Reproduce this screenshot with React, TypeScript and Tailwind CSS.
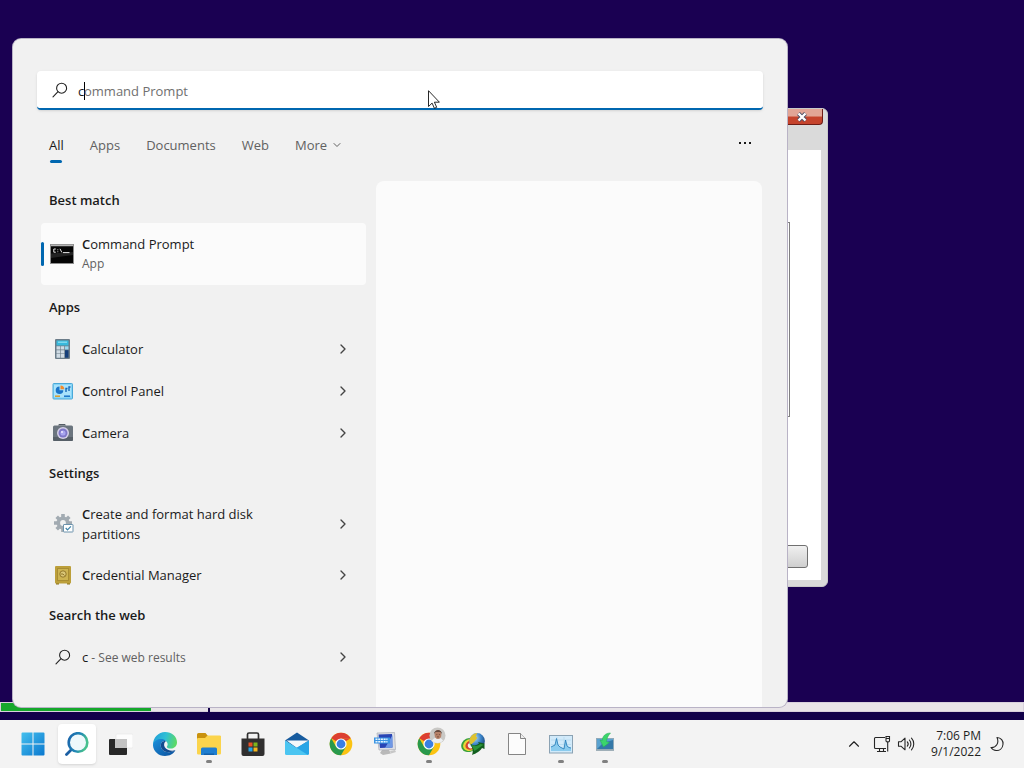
import React, { useState } from "react";
import { ChevronDown, ChevronRight, ChevronUp } from "lucide-react";
import clsx from "clsx";

type IconProps = { className?: string };

// Icons

function SearchIcon({ className }: IconProps) {
  return (
    <svg viewBox="0 0 16 16" className={className} fill="none" stroke="#222" strokeWidth="1.1">
      <circle cx="9.6" cy="6.2" r="5" />
      <path d="M5.8 9.8 1 14.8" strokeLinecap="round" />
    </svg>
  );
}

function CommandPromptIcon() {
  return (
    <svg viewBox="0 0 24 20" className="w-6 h-5">
      <rect x="0.5" y="0.5" width="23" height="19" fill="#050505" stroke="#8d8d8d" />
      <path d="M1 1.5h22" stroke="#b5b5b5" strokeWidth="1.4" />
      <path d="M1 9.5 23 8v3L1 14z" fill="#222" />
      <path d="M5.8 5H3.8v3.2h2M7.8 5.4v.8M7.8 7.4v.8M10 4.8l1.8 3.6M13 8.6h6.5" stroke="#e6e6e6" fill="none" />
    </svg>
  );
}

function CalculatorIcon() {
  return (
    <svg viewBox="0 0 24 24" className="w-6 h-6">
      <rect x="5" y="2" width="15" height="20" rx="1" fill="#6b7c89" />
      <rect x="6.500" y="3.500" width="12" height="5" fill="#38b9dc" />
      <path d="M8 4.500h9v1.500H8z" fill="#7fd8ee" />
      <path d="M6.500 9.300h3.600v3.200H6.500zM10.700 9.300h3.600v3.200h-3.600zM6.500 13.200h3.600v3.200H6.500zM10.700 13.200h3.600v3.200h-3.600zM6.500 17.100h3.600v3.600H6.500zM10.700 17.100h3.600v3.600h-3.600z" fill="#cfdbe4" />
      <path d="M15 9.300h3.500v3.200H15z" fill="#9ad8ef" />
      <path d="M15 13.200h3.500v7.500H15z" fill="#153f7a" />
    </svg>
  );
}

function ControlPanelIcon() {
  return (
    <svg viewBox="0 0 24 24" className="w-6 h-6">
      <rect x="3" y="4.500" width="19.500" height="15.500" rx="0.800" fill="#87d5f7" stroke="#4ba9d8" />
      <path d="M4 6h17v11L12 18.500 4 18z" fill="#a9e3fb" />
      <path d="M9.500 7.500a3.800 3.800 0 1 0 3.800 3.800H9.500z" fill="#1b75c9" />
      <path d="M10.500 6.500v3.800h3.800a3.800 3.800 0 0 0-3.800-3.800z" fill="#f08a2c" />
      <path d="M16 13V9.500h1.500M19 12V8h1.500" stroke="#1769b8" strokeWidth="1.400" fill="none" />
      <path d="M5 17.200h5" stroke="#dd9b26" strokeWidth="1.500" />
      <path d="M14 17.200h6" stroke="#1b75c9" strokeWidth="1.500" />
    </svg>
  );
}

function CameraIcon() {
  return (
    <svg viewBox="0 0 24 24" className="w-6 h-6">
      <path d="M8 4.500 9 3h6l1 1.500z" fill="#555e66" />
      <rect x="3" y="4.500" width="20" height="15.500" rx="1.500" fill="#6b757e" />
      <path d="M3 16h20v2.500a1.500 1.500 0 0 1-1.500 1.500h-17A1.500 1.500 0 0 1 3 18.500z" fill="#565f67" />
      <circle cx="13" cy="12" r="6" fill="#d5d0e8" />
      <circle cx="13" cy="12" r="4.500" fill="#7f78c9" />
      <circle cx="13" cy="12" r="2.600" fill="#a9a6f0" />
      <circle cx="12" cy="11" r="1" fill="#f0eaff" />
    </svg>
  );
}

function GearCheckIcon() {
  return (
    <svg viewBox="0 0 24 24" className="w-6 h-6">
      <g stroke="#a2abb2" strokeWidth="3.600">
        <path d="M13 2v18M4 11h18M6.700 4.700l12.600 12.600M19.300 4.700 6.700 17.300" />
      </g>
      <circle cx="13" cy="11" r="6.500" fill="#a2abb2" />
      <circle cx="13" cy="11" r="2.900" fill="#f1f1f1" />
      <rect x="13.500" y="12.500" width="9.500" height="7.500" rx="0.500" fill="#fff" stroke="#6c93ad" />
      <path d="m15.700 16 1.800 1.800 3.400-3.400" stroke="#3b82a8" strokeWidth="1.200" fill="none" />
    </svg>
  );
}

function SafeIcon() {
  return (
    <svg viewBox="0 0 24 24" className="w-6 h-6">
      <path d="M6 19h3v2.500H6zM17 19h3v2.500h-3z" fill="#8d7420" />
      <rect x="5" y="3" width="16" height="17.500" rx="1" fill="#bc9f3a" />
      <rect x="7.500" y="5.500" width="11" height="12" fill="#cdb452" stroke="#a88d33" />
      <circle cx="13" cy="11" r="3.200" fill="#d9c677" stroke="#93782a" />
      <path d="M13 11h-2.200M13 11l1.500 1.500" stroke="#93782a" />
    </svg>
  );
}

function StartIcon() {
  return (
    <svg viewBox="0 0 24 24" className="w-6 h-6">
      <defs>
        <linearGradient id="start" x1="0" y1="0" x2="1" y2="1" gradientUnits="objectBoundingBox">
          <stop offset="0" stopColor="#45c0ee" />
          <stop offset="1" stopColor="#0a78cf" />
        </linearGradient>
      </defs>
      <path d="M1.500 0.500h10v11h-11v-10a1 1 0 0 1 1-1zM12.500 0.500h10a1 1 0 0 1 1 1v10h-11zM0.500 12.500h11v11h-10a1 1 0 0 1-1-1zM12.500 12.500h11v10a1 1 0 0 1-1 1h-10z" fill="url(#start)" />
    </svg>
  );
}

function TaskbarSearchIcon() {
  return (
    <svg viewBox="0 0 24 24" className="w-6 h-6" fill="none">
      <defs>
        <linearGradient id="lens" x1="0" y1="0" x2="1" y2="0.300">
          <stop offset="0" stopColor="#1b64ab" />
          <stop offset="0.600" stopColor="#2187b5" />
          <stop offset="1" stopColor="#46c08f" />
        </linearGradient>
      </defs>
      <path d="m7.500 16.500-6 6" stroke="#1b5fa3" strokeWidth="2.800" strokeLinecap="round" />
      <circle cx="13" cy="10.500" r="9.300" fill="#eef8fb" stroke="url(#lens)" strokeWidth="2.600" />
    </svg>
  );
}

function TaskViewIcon() {
  return (
    <svg viewBox="0 0 24 24" className="w-6 h-6">
      <rect x="7" y="2" width="17" height="14" rx="1" fill="#fdfdfd" stroke="#e3e3e3" strokeWidth="0.500" />
      <rect x="0" y="7" width="18" height="16" rx="1" fill="#282828" />
      <path d="M6 7h12v9H6z" fill="#c3c3c3" />
    </svg>
  );
}

function EdgeIcon() {
  return (
    <svg viewBox="0 0 24 24" className="w-6 h-6">
      <defs>
        <linearGradient id="edgeTop" x1="0" y1="0.300" x2="1" y2="0.500">
          <stop offset="0" stopColor="#219fd8" />
          <stop offset="0.500" stopColor="#2fbfd5" />
          <stop offset="1" stopColor="#5dda62" />
        </linearGradient>
        <linearGradient id="edgeBody" x1="0" y1="0" x2="1" y2="1">
          <stop offset="0" stopColor="#1c91dc" />
          <stop offset="1" stopColor="#0b4f9c" />
        </linearGradient>
      </defs>
      <path d="M0 13C0 5.500 5.500 0 12 0c7 0 12 4.800 12 10.200 0 4-3 6.300-6.200 6.300-2.800 0-4.300-1-4-1.800 1.200-1.500 1.200-3.500-.2-5C10.500 6.500 3 7 0 13z" fill="url(#edgeTop)" />
      <path d="M0 12.500C1.500 7 9.500 5.500 13 9c-3.500-.5-5.500 2-5.300 4.700.3 4.200 4.500 7.300 10 6.300 2-.3 3.500-1 4.700-1.700C20.500 22 16.500 24 12 24 5 24-.3 18.500 0 12.500z" fill="url(#edgeBody)" />
      <path d="M7.700 13.700C7.500 11 9.500 8.500 13 9c-2 1.500-2.500 4-1.200 6.300 2 3 6.700 4.200 10.600 3-1.200 1-3 1.500-4.700 1.700-5.500 1-9.700-2.100-10-6.300z" fill="#124b8f" />
    </svg>
  );
}

function ExplorerIcon() {
  return (
    <svg viewBox="0 0 24 24" className="w-6 h-6">
      <path d="M0 2.500A1.500 1.500 0 0 1 1.500 1h7l2.500 3h11.500A1.500 1.500 0 0 1 24 5.500V20H0z" fill="#c9920f" />
      <path d="M0 7.300A1.300 1.300 0 0 1 1.300 6H8l2.500-2.500h12.200A1.300 1.300 0 0 1 24 4.800v16.400a1.300 1.300 0 0 1-1.300 1.300H1.300A1.300 1.300 0 0 1 0 21.200z" fill="#fbd44c" />
      <path d="M4 23v-6a1.500 1.500 0 0 1 1.500-1.500h13A1.500 1.500 0 0 1 20 17v6z" fill="#1f7ed0" />
      <path d="M7 21.500h10V23H7z" fill="#1460a8" />
    </svg>
  );
}

function StoreIcon() {
  return (
    <svg viewBox="0 0 24 24" className="w-6 h-6">
      <path d="M6.500 7V2.500a1.500 1.500 0 0 1 1.500-1.500h8a1.500 1.500 0 0 1 1.500 1.500V7" fill="none" stroke="#2f2f2f" strokeWidth="1.700" />
      <path d="M0.500 6.500h23V22a2 2 0 0 1-2 2h-19a2 2 0 0 1-2-2z" fill="#302f2f" />
      <path d="M7.500 10.500h4v4h-4z" fill="#ea5025" />
      <path d="M12.500 10.500h4v4h-4z" fill="#7fb41c" />
      <path d="M7.500 15.500h4v4h-4z" fill="#27a4e4" />
      <path d="M12.500 15.500h4v4h-4z" fill="#f5b71e" />
    </svg>
  );
}

function MailIcon() {
  return (
    <svg viewBox="0 0 24 24" className="w-6 h-6">
      <path d="M0 8.500 12 0.500l12 8L12 17z" fill="#175b9e" />
      <path d="M1.500 8.500h22L12 16z" fill="#f4f8fa" />
      <path d="M24 8.500v13a1.500 1.500 0 0 1-1.500 1.500h-21L12 15.500z" fill="#27a5e6" />
      <path d="M0 8.500v13A1.500 1.500 0 0 0 1.500 23H23z" fill="#4bc5f1" />
    </svg>
  );
}

function ChromeIcon() {
  return (
    <svg viewBox="0 0 24 24" className="w-6 h-6">
      <circle cx="12" cy="12" r="11.300" fill="#fbc312" />
      <path d="M12 12 2.210 6.350A11.300 11.300 0 0 1 21.790 6.350H12z" fill="#dc3f32" />
      <path d="M2.210 6.350A11.300 11.300 0 0 0 12 23.300L16.900 14.800 12 12 7.100 14.800z" fill="#29994c" />
      <path d="M12 12 21.790 6.350H12L7 9z" fill="#dc3f32" />
      <circle cx="12" cy="12" r="5.600" fill="#fff" />
      <circle cx="12" cy="12" r="4.400" fill="#397fe3" />
    </svg>
  );
}

function MonitorAppIcon() {
  return (
    <svg viewBox="0 0 24 24" className="w-6 h-6">
      <path d="M9 18h7l2 3.500-8 1.500-3-2z" fill="#b9b9b9" />
      <path d="m4 1 17.500-.5 1 17L6 18z" fill="#dddfe4" stroke="#9fa3ac" strokeWidth="0.600" />
      <path d="m5.500 2.500 13.500-.5.500 13.500L7 16z" fill="#2945b5" />
      <path d="m12 16 7.500-13v12.500z" fill="#6e98e5" />
      <path d="M1 5.500h16v6H1z" fill="#3b95e3" />
      <path d="M2.500 7.200h12M2.500 9.700h12" stroke="#eaf6ff" strokeWidth="1.400" strokeDasharray="2 0.700" />
      <path d="m17 19 5-1 1 2-5 1.500z" fill="#c7c7c7" />
    </svg>
  );
}

function DownloadGlobeIcon() {
  return (
    <svg viewBox="0 0 24 24" className="w-6 h-6">
      <defs>
        <radialGradient id="globe" cx="0.350" cy="0.300" r="0.800">
          <stop offset="0" stopColor="#b8ddf7" />
          <stop offset="0.500" stopColor="#3c86ca" />
          <stop offset="1" stopColor="#163768" />
        </radialGradient>
      </defs>
      <g transform="rotate(-25 8 13)">
        <ellipse cx="8" cy="13" rx="8" ry="6.800" fill="#38a13a" />
        <ellipse cx="8.800" cy="13.400" rx="7" ry="5.800" fill="#e9d737" />
        <ellipse cx="9.600" cy="13.800" rx="5.600" ry="4.400" fill="#d5422d" />
        <ellipse cx="10.400" cy="14.200" rx="4" ry="3" fill="#f0eee4" />
      </g>
      <circle cx="16" cy="9" r="7.900" fill="url(#globe)" />
      <path d="M8.300 9c.4-4 3.700-7.800 8-8l-1.500 3 1.500 2-3.300 4-3.200 3c-.9-1-1.500-2.500-1.500-4z" fill="#dfc331" />
      <path d="M9.500 11.500c3 3 6 2 8.500 0L17 10l6.500 1.500v5.500L21 16c-1.500 2.500-5.500 5.500-10 7 1.500-3 .5-7.500-1.500-11.500z" fill="#125e1e" />
      <path d="M10 12c3.200 3 6.300 2.200 9.500 0l3 .7L13.500 19z" fill="#2b9439" />
    </svg>
  );
}

function DocumentIcon() {
  return (
    <svg viewBox="0 0 24 24" className="w-6 h-6">
      <path d="M3.500 1.500h12l5 5v16h-17z" fill="#fcfcfc" stroke="#777" strokeWidth="0.900" />
      <path d="M15.500 1.500v5h5" fill="#eee" stroke="#777" strokeWidth="0.900" />
    </svg>
  );
}

function PerfMonitorIcon() {
  return (
    <svg viewBox="0 0 24 24" className="w-6 h-6">
      <rect x="0.500" y="3.500" width="23" height="17.500" fill="#d1eafa" stroke="#8ba2b3" />
      <path d="M2 8h20M2 12.500h20M8 5v14M15 5v14" stroke="#b2d7ec" strokeWidth="0.700" />
      <path d="M2 19v-4l2-1 2-1L7.500 6.500 9 13l2 2 2 1 2 1L16.500 8 18 14l2 1.500 2 .5v3z" fill="#8acbee" />
      <path d="m2 15 2-1 2-1L7.500 6.500 9 13l2 2 2 1 2 1L16.500 8 18 14l2 1.500 2 .5" stroke="#2b81bc" fill="none" strokeWidth="0.900" />
    </svg>
  );
}

function InstallerIcon() {
  return (
    <svg viewBox="0 0 24 24" className="w-6 h-6">
      <rect x="3.500" y="6.500" width="17" height="11" fill="#5aa2d0" stroke="#8fa9b9" />
      <path d="m4 17 6-6 10-3v9z" fill="#3478a8" />
      <path d="M3 18.200h18" stroke="#9aabb5" strokeWidth="1.500" />
      <path d="M17.500 1c-5 0-8 3-8.300 7.500L7 8l3.500 7 6-4.500-3-.8c.2-3.200 1.500-6 4-8.700z" fill="#3bd56b" stroke="#25ad54" strokeWidth="0.500" />
    </svg>
  );
}

function ProfileBadge() {
  return (
    <svg viewBox="0 0 18 18" className="h-[17px] w-[17px]">
      <circle cx="9" cy="9" r="8.500" fill="#c9c8c5" />
      <path d="M3 14.500c1.500-2.500 3.500-3 6-3s4.500.5 6 3A8.500 8.500 0 0 1 3 14.500z" fill="#eceef0" />
      <ellipse cx="9.500" cy="8" rx="3.600" ry="4.700" fill="#b68168" />
      <path d="M5.500 7.500C5 2.500 14 2 13.500 7.500L12 5H7z" fill="#4a3832" />
      <path d="M7.800 8h1M10.500 8h1M8.500 10.500h2" stroke="#5a3527" strokeWidth="0.700" />
    </svg>
  );
}

function NetworkIcon() {
  return (
    <svg viewBox="0 0 18 18" className="w-[18px] h-[18px]" fill="none" stroke="#262626" strokeWidth="1.100">
      <path d="M12 2.500H2.500a1 1 0 0 0-1 1v9a1 1 0 0 0 1 1H13" />
      <path d="M6.500 13.500v3M10.500 13.500v3M4 16.500h9" />
      <path d="M13 1.500h3.500v4.200c0 .6-.5 1.200-1.200 1.200h-1c-.8 0-1.300-.5-1.300-1.200zM13 3.500h3.500M14.700 7v9.500" />
    </svg>
  );
}

function VolumeIcon() {
  return (
    <svg viewBox="0 0 18 18" className="w-[18px] h-[18px]" fill="none" stroke="#262626" strokeWidth="1.100" strokeLinecap="round" strokeLinejoin="round">
      <path d="M1.500 6.700h2.700L8 3.200v11.600l-3.800-3.500H1.500z" />
      <path d="M10.300 6.800c1 1.200 1 3.200 0 4.400M12.400 5c2 2.200 2 5.800 0 8M14.500 3.200c3 3.200 3 8.400 0 11.600" />
    </svg>
  );
}

function MoonIcon() {
  return (
    <svg viewBox="0 0 16 16" className="w-4 h-4" fill="none" stroke="#262626" strokeWidth="1.100" strokeLinejoin="round">
      <path d="M8 1.500c4.200.2 6.300 3.200 6 6.700-.4 4.500-3.600 6.500-6.800 6.300-2.400-.1-4.200-1.300-5.200-3 5 .3 8.500-4.500 6-10z" />
    </svg>
  );
}

// Search results

type Result = {
  name: string;
  icon: () => React.ReactElement;
};

const apps: Result[] = [
  { name: "Calculator", icon: CalculatorIcon },
  { name: "Control Panel", icon: ControlPanelIcon },
  { name: "Camera", icon: CameraIcon },
];

const settings: Result[] = [
  { name: "Create and format hard disk partitions", icon: GearCheckIcon },
  { name: "Credential Manager", icon: SafeIcon },
];

function SectionTitle({ children }: { children: React.ReactNode }) {
  return <h2 className="flex h-10 items-center pl-2 text-[13px] font-semibold">{children}</h2>;
}

function ResultRow({ name, icon: Icon }: Result) {
  return (
    <li>
      <button className="flex min-h-[42px] w-full items-center gap-2 rounded py-[10px] pl-[9px] pr-[15px] text-left hover:bg-white/70">
        <span className="-my-1 shrink-0">
          <Icon />
        </span>
        {/* the typed letter is emphasised in every match */}
        <span className="block flex-1 pr-14 text-[13px] leading-5 first-letter:font-semibold">{name}</span>
        <ChevronRight className="h-4 w-4 shrink-0 text-[#444]" />
      </button>
    </li>
  );
}

function SearchBox() {
  const [query, setQuery] = useState("c");

  return (
    <div className="relative flex h-[39px] items-center rounded border-b-2 border-[#0067b0] bg-white pl-[15px] shadow-sm">
      <label htmlFor="query" aria-label="Search">
        <SearchIcon className="h-4 w-4" />
      </label>
      <input
        id="query"
        value={query}
        onChange={(e) => setQuery(e.target.value)}
        autoComplete="off"
        className="ml-[10px] h-full flex-1 bg-transparent pt-[2px] text-[13px] outline-none"
      />
      {query === "c" && (
        <div className="pointer-events-none absolute left-[47px] flex items-center pt-[2px] text-[13px] leading-5 text-[#707070]">
          <span className="-mr-px h-[18px] w-px bg-black" />
          ommand Prompt
        </div>
      )}
    </div>
  );
}

function SearchTabs() {
  const [active, setActive] = useState("All");
  const tabs = ["All", "Apps", "Documents", "Web"];

  return (
    <div className="mt-[25px] flex items-start gap-[26px] px-3 text-[13px] leading-5 text-[#616161]">
      {tabs.map((tab) => (
        <button
          key={tab}
          onClick={() => setActive(tab)}
          className={clsx("flex flex-col items-center gap-[5px]", active === tab && "text-[#1a1a1a]")}
        >
          {tab}
          <span className={clsx("h-[3px] w-3 rounded-full", active === tab && "bg-[#0067b0]")} />
        </button>
      ))}
      <button className="flex items-center gap-1">
        More <ChevronDown className="h-3 w-3" strokeWidth={2} />
      </button>
      <button aria-label="Options" className="ml-auto flex h-4 items-center gap-[3px]">
        <span className="h-[2px] w-[2px] bg-[#1a1a1a]" />
        <span className="h-[2px] w-[2px] bg-[#1a1a1a]" />
        <span className="h-[2px] w-[2px] bg-[#1a1a1a]" />
      </button>
    </div>
  );
}

function SearchPanel() {
  return (
    <section className="absolute bottom-[13px] left-[13px] top-[39px] flex w-[774px] flex-col overflow-hidden rounded-lg bg-[#f1f1f1] px-6 pt-8 text-[#1a1a1a] shadow-[0_0_0_1px_#b9b3c6]">
      <SearchBox />
      <SearchTabs />

      <div className="mt-[18px] flex min-h-0 flex-1 gap-[10px]">
        <div className="ml-1 w-[325px] shrink-0">
          <SectionTitle>Best match</SectionTitle>
          <button className="mb-[3px] mt-[2px] flex h-[62px] w-full items-center rounded bg-[#fbfbfb] text-left">
            <span className="h-6 w-[3px] rounded-full bg-[#0067b0]" />
            <span className="ml-[6px] mr-2">
              <CommandPromptIcon />
            </span>
            <span className="flex flex-col">
              <span className="block text-[13px] leading-5 first-letter:font-semibold">Command Prompt</span>
              <span className="text-xs leading-5 text-[#616161]">App</span>
            </span>
          </button>

          <SectionTitle>Apps</SectionTitle>
          <ul>
            {apps.map((app) => (
              <ResultRow key={app.name} {...app} />
            ))}
          </ul>

          <SectionTitle>Settings</SectionTitle>
          <ul>
            {settings.map((setting) => (
              <ResultRow key={setting.name} {...setting} />
            ))}
          </ul>

          <SectionTitle>Search the web</SectionTitle>
          <button className="flex min-h-[42px] w-full items-center py-[10px] pl-[14px] pr-[15px] text-left">
            <SearchIcon className="h-4 w-4" />
            <span className="ml-[11px] flex-1 text-xs leading-5 text-[#616161]">
              <span className="text-[13px] text-[#1a1a1a]">c</span> - See web results
            </span>
            <ChevronRight className="h-4 w-4 text-[#444]" />
          </button>
        </div>

        <div className="mr-px flex-1 rounded-t-lg bg-[#fbfbfb]" />
      </div>
    </section>
  );
}

// Desktop

function DialogWindow() {
  return (
    <section className="absolute left-[240px] top-[108px] flex h-[479px] w-[588px] flex-col rounded-md border border-[#c9c9c9] bg-[#dadada] px-[6px] pb-[6px]">
      <div className="flex h-[41px] shrink-0 items-start justify-end">
        <button
          aria-label="Close"
          className="-mr-[2px] flex h-4 w-[42px] items-center justify-center rounded-b border border-t-0 border-[#6d1c15] bg-linear-to-b from-[#e2a596] from-45% to-[#c5432c] to-55%"
        >
          <svg viewBox="0 0 12 10" className="h-[10px] w-3">
            <path d="m2.500 1.500 7 7m0-7-7 7" stroke="#4b4f66" strokeWidth="4" />
            <path d="m2.500 1.500 7 7m0-7-7 7" stroke="#fff" strokeWidth="2.400" />
          </svg>
        </button>
      </div>
      <div className="flex flex-1 flex-col items-end justify-between bg-white pb-3 pt-[72px]">
        <div className="mr-[31px] h-[195px] w-[500px] border border-[#808080]" />
        <button aria-label="Cancel" className="mr-[13px] h-[23px] w-[75px] rounded-[3px] border border-[#707070] bg-linear-to-b from-[#f0f0f0] to-[#cfcfcf]" />
      </div>
    </section>
  );
}

function ProgressStrip() {
  return (
    <div className="absolute inset-x-0 bottom-0 bg-[#12004a] pb-2">
      <div className="flex h-[10px] border border-[#d8d0dc] bg-[#e8e4e8]">
        <div className="h-full w-[150px] bg-[#16a82c]" />
        <div className="ml-[57px] h-[10px] w-[2px] bg-[#12004a]" />
      </div>
    </div>
  );
}

function Pointer() {
  return (
    <svg viewBox="0 0 12 19" className="absolute left-[428px] top-[90px] h-[19px] w-3">
      <path d="M0.500 0.700v15.800l3.600-3.400 2.300 5.200 2.300-1-2.300-5.100h5z" fill="#fff" stroke="#111" strokeWidth="0.900" />
    </svg>
  );
}

// Taskbar

const taskbarApps = [
  { name: "Start", icon: StartIcon },
  { name: "Search", icon: TaskbarSearchIcon, active: true },
  { name: "Task View", icon: TaskViewIcon },
  { name: "Edge", icon: EdgeIcon },
  { name: "File Explorer", icon: ExplorerIcon, running: true },
  { name: "Microsoft Store", icon: StoreIcon },
  { name: "Mail", icon: MailIcon },
  { name: "Chrome", icon: ChromeIcon },
  { name: "Remote Desktop", icon: MonitorAppIcon },
  { name: "Chrome profile", icon: ChromeIcon, running: true, badge: true },
  { name: "Download Manager", icon: DownloadGlobeIcon },
  { name: "Document", icon: DocumentIcon },
  { name: "Performance Monitor", icon: PerfMonitorIcon, running: true },
  { name: "Installer", icon: InstallerIcon, running: true },
];

function Taskbar() {
  return (
    <footer className="flex h-12 shrink-0 items-center bg-[#f3f3f3] pl-[11px] pr-[19px] text-[#1f1f1f]">
      <nav className="flex flex-1">
        {taskbarApps.map(({ name, icon: Icon, active, running, badge }) => (
          <button
            key={name}
            aria-label={name}
            className="relative flex h-12 w-11 items-center justify-center"
          >
            <span
              className={clsx(
                "flex h-10 w-[38px] items-center justify-center rounded",
                active && "bg-white shadow-sm"
              )}
            >
              <Icon />
            </span>
            {badge && (
              <span className="absolute right-[5px] top-[7px]">
                <ProfileBadge />
              </span>
            )}
            {running && <span className="absolute bottom-[5px] h-[3px] w-[6px] rounded-full bg-[#808080]" />}
          </button>
        ))}
      </nav>

      <div className="flex items-center">
        <button aria-label="Show hidden icons">
          <ChevronUp className="h-[18px] w-[18px]" strokeWidth={1.5} />
        </button>
        <button aria-label="Network and volume" className="ml-[10px] flex gap-[6px]">
          <NetworkIcon />
          <VolumeIcon />
        </button>
        <button className="ml-4 text-right text-xs">
          <div>7:06 PM</div>
          <div>9/1/2022</div>
        </button>
        <button aria-label="Notifications" className="ml-2">
          <MoonIcon />
        </button>
      </div>
    </footer>
  );
}

export default function App() {
  return (
    <div className="flex h-screen flex-col overflow-hidden bg-[#1a0052] font-['Open_Sans','Noto_Sans',sans-serif]">
      <main className="relative flex-1">
        <ProgressStrip />
        <DialogWindow />
        <SearchPanel />
        <Pointer />
      </main>
      <Taskbar />
    </div>
  );
}
